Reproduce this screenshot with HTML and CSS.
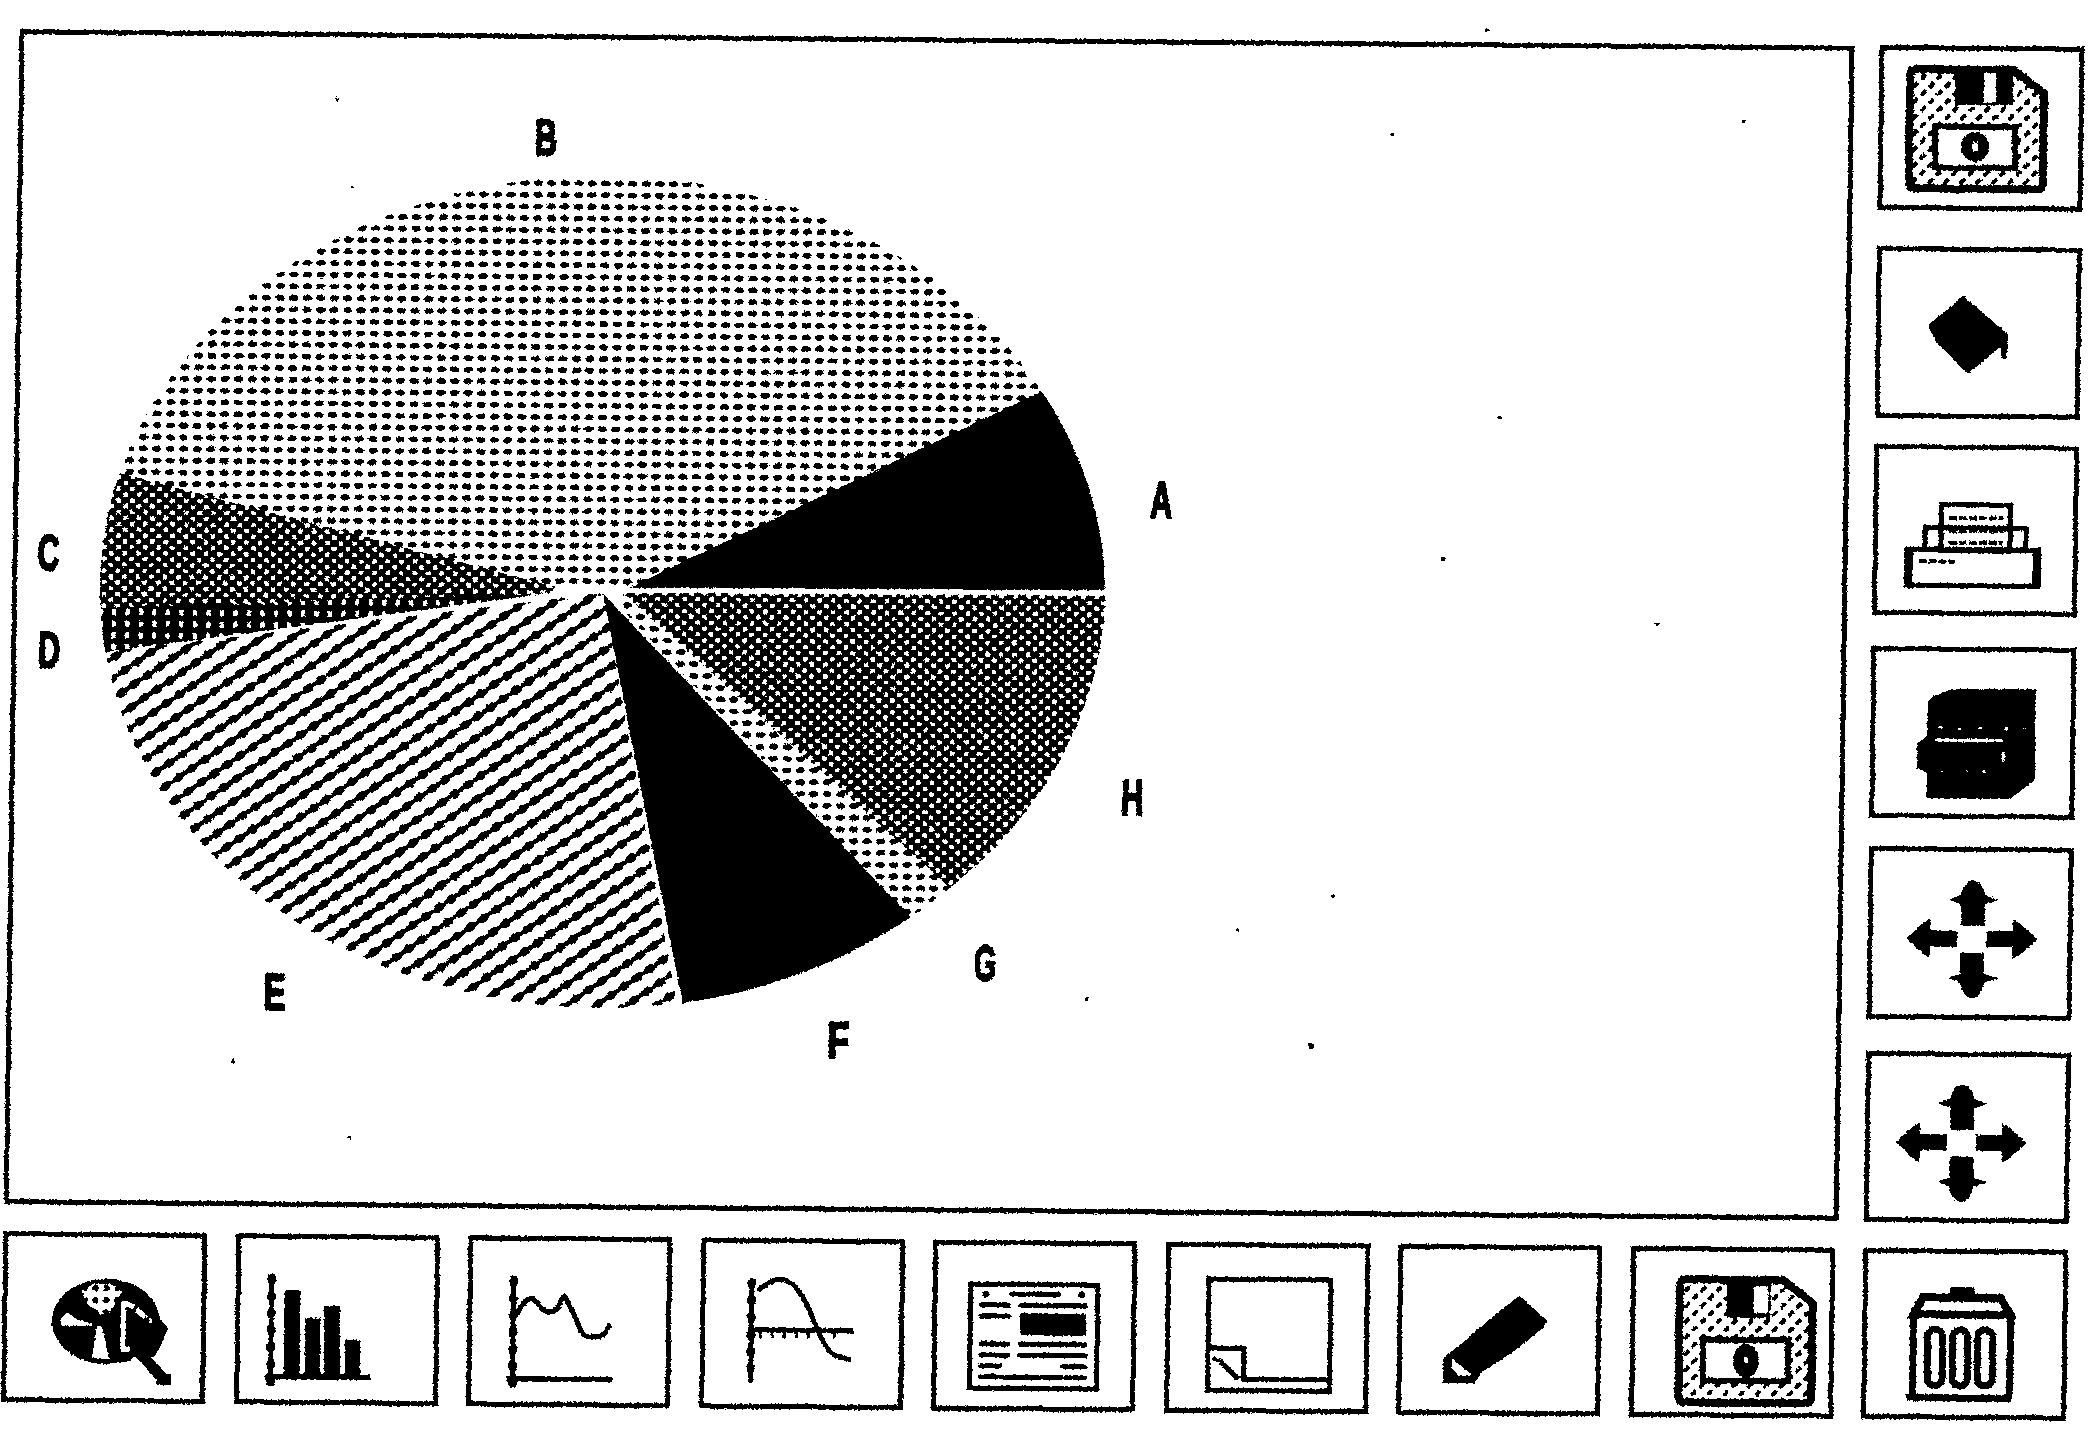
FILE: index.html
```html
<!DOCTYPE html>
<html lang="en">
<head>
    <meta charset="UTF-8">
    <title>Pie chart</title>
    <link rel="stylesheet" href="styles.css">
</head>
<body>
    <svg class="defs" xmlns="http://www.w3.org/2000/svg">
        <defs>
            <filter id="scan" x="0" y="0" width="100%" height="100%" color-interpolation-filters="sRGB">
                <feTurbulence type="fractalNoise" baseFrequency="0.45" numOctaves="2" seed="4" result="noise"/>
                <feDisplacementMap in="SourceGraphic" in2="noise" scale="3.5" xChannelSelector="R" yChannelSelector="G"/>
                <feComponentTransfer>
                    <feFuncR type="discrete" tableValues="0 1"/>
                    <feFuncG type="discrete" tableValues="0 1"/>
                    <feFuncB type="discrete" tableValues="0 1"/>
                </feComponentTransfer>
            </filter>
            <pattern id="dots" width="13.5" height="11.7" patternUnits="userSpaceOnUse">
                <ellipse cx="6.7" cy="5.8" rx="4.8" ry="3"/>
            </pattern>
            <pattern id="dark" width="13.5" height="11.7" patternUnits="userSpaceOnUse">
                <rect width="13.5" height="11.7"/>
                <rect x="1" y="3" width="4.6" height="4.4" fill="#fff"/>
                <rect x="7.8" y="8.9" width="4.6" height="4.4" fill="#fff"/>
                <rect x="7.8" y="-2.9" width="4.6" height="4.4" fill="#fff"/>
            </pattern>
            <pattern id="darker" width="13.5" height="11.7" patternUnits="userSpaceOnUse">
                <rect width="13.5" height="11.7"/>
                <rect x="4.5" y="2.5" width="4.4" height="6" fill="#fff"/>
            </pattern>
            <pattern id="hatch" width="15.6" height="17" patternUnits="userSpaceOnUse" patternTransform="rotate(-35)">
                <rect y="6.3" width="15.6" height="4.4"/>
                <ellipse cx="7.8" cy="8.5" rx="5.5" ry="4.2"/>
            </pattern>
            <pattern id="weave" width="16" height="16" patternUnits="userSpaceOnUse">
                <path d="M2 7L7 2M10 15L15 10" stroke="#000" stroke-width="4"/>
            </pattern>
            <pattern id="spots" width="11" height="12" patternUnits="userSpaceOnUse">
                <ellipse cx="5" cy="5" rx="3.2" ry="3.2"/>
            </pattern>
            <symbol id="move" viewBox="5 5 192 158" overflow="visible">
                <path d="M102 31C108 31 112 36 114 45L128 50L114 54V76H90V54L77 50L90 45C92 36 96 31 102 31Z"/>
                <path d="M90 103H114V124L128 128L114 133C112 142 108 148 102 148C96 148 92 142 90 133L77 128L90 124Z"/>
                <path d="M36 89L52 74L60 69V81H87V97H60V109L52 104Z"/>
                <path d="M167 89L150 74L142 69V81H116V97H142V109L150 104Z"/>
            </symbol>
        </defs>
    </svg>

    <div class="scan">
        <div class="upper">
            <main class="chart">
                <svg class="pie" viewBox="0 0 1825 1165" xmlns="http://www.w3.org/2000/svg">
                    <g transform="translate(-4 -2)">
                        <path d="M616 550L1026 350A502 414 0 0 0 105 440L543 550Z" fill="url(#dots)"/>
                        <path d="M543 550L105 440A502 414 0 0 0 88 575L536 556Z" fill="url(#dark)"/>
                        <path d="M536 556L88 575A502 414 0 0 0 93 619Z" fill="url(#darker)"/>
                        <path d="M590 556L93 619A502 414 0 0 0 669 965Z" fill="url(#hatch)"/>
                        <path d="M616 550L1026 350A502 414 0 0 1 1092 548Z"/>
                        <path d="M590 556L675 965A502 414 0 0 0 902 877Z"/>
                        <path d="M598 560L902 877A502 414 0 0 0 941 847L610 555Z" fill="url(#dots)"/>
                        <path d="M610 555L1092 554A502 414 0 0 1 941 847Z" fill="url(#dark)"/>

                        <text class="pie-label" x="527" y="118" textLength="22" lengthAdjust="spacingAndGlyphs">B</text>
                        <text class="pie-label" x="1147" y="475" textLength="22" lengthAdjust="spacingAndGlyphs">A</text>
                        <text class="pie-label" x="35" y="538" textLength="22" lengthAdjust="spacingAndGlyphs">C</text>
                        <text class="pie-label" x="37" y="635" textLength="22" lengthAdjust="spacingAndGlyphs">D</text>
                        <text class="pie-label" x="1122" y="773" textLength="22" lengthAdjust="spacingAndGlyphs">H</text>
                        <text class="pie-label" x="977" y="940" textLength="22" lengthAdjust="spacingAndGlyphs">G</text>
                        <text class="pie-label" x="831" y="1018" textLength="22" lengthAdjust="spacingAndGlyphs">F</text>
                        <text class="pie-label" x="267" y="975" textLength="22" lengthAdjust="spacingAndGlyphs">E</text>
                    </g>

                    <g class="specks">
                        <circle cx="1462" cy="-17" r="2"/>
                        <circle cx="313" cy="62" r="2"/>
                        <circle cx="1369" cy="88" r="2"/>
                        <circle cx="1720" cy="72" r="2"/>
                        <circle cx="1480" cy="370" r="2"/>
                        <circle cx="1425" cy="512" r="2"/>
                        <circle cx="1640" cy="575" r="2"/>
                        <circle cx="1320" cy="850" r="2"/>
                        <circle cx="1225" cy="885" r="2"/>
                        <circle cx="1300" cy="1000" r="3"/>
                        <circle cx="1075" cy="955" r="2"/>
                        <circle cx="222" cy="1025" r="2"/>
                        <circle cx="340" cy="1100" r="2"/>
                        <circle cx="330" cy="150" r="2"/>
                    </g>
                </svg>
            </main>

            <aside class="side-tools">
                <button class="tool">
                    <svg class="icon" viewBox="5 5 192 158">
                        <g transform="translate(0 3)">
                            <path class="disk" d="M37 21H134L165 44V134Q165 140 159 140H37Q31 140 31 134V27Q31 21 37 21Z"/>
                            <rect x="76" y="21" width="58" height="35"/>
                            <rect x="105" y="24" width="12" height="30" fill="#fff"/>
                            <rect class="label" x="57" y="78" width="80" height="41"/>
                            <ellipse cx="97" cy="98" rx="14" ry="15"/>
                            <rect x="95" y="93" width="5" height="9" fill="#fff"/>
                        </g>
                    </svg>
                </button>
                <button class="tool">
                    <svg class="icon" viewBox="5 5 192 158">
                        <g transform="translate(0 -3)">
                            <path d="M52 80L87 50L127 84L132 88V114L126 112V100L93 128L60 96Z"/>
                        </g>
                    </svg>
                </button>
                <button class="tool">
                    <svg class="icon" viewBox="5 5 192 158">
                        <g transform="translate(0 2)">
                            <rect class="line" x="52" y="79" width="101" height="22"/>
                            <rect class="line" x="68" y="56" width="69" height="46"/>
                            <path class="dashes" d="M76 69H130M76 82H130M76 94H130"/>
                            <rect class="line" x="34" y="101" width="132" height="36"/>
                            <rect x="32" y="101" width="8" height="37"/>
                            <rect x="160" y="101" width="8" height="37"/>
                            <path class="dashes" d="M46 113H82"/>
                        </g>
                    </svg>
                </button>
                <button class="tool">
                    <svg class="icon" viewBox="5 5 192 158">
                        <g transform="translate(0 3)">
                            <path d="M62 45L82 37H165V128L140 147H57V122L47 117V92L57 85V50Z"/>
                            <rect x="65" y="87" width="67" height="3" fill="#fff"/>
                            <ellipse cx="133" cy="105" rx="2" ry="5" fill="#fff"/>
                            <path class="grit" d="M68 76H72M88 77H91M108 76H112M135 77H138M152 76H155M70 120H74M96 119H99M112 120H116"/>
                        </g>
                    </svg>
                </button>
                <button class="tool">
                    <svg class="icon" viewBox="5 5 192 158"><use href="#move" x="8" y="5"/></svg>
                </button>
                <button class="tool">
                    <svg class="icon" viewBox="5 5 192 158"><use href="#move" y="5"/></svg>
                </button>
            </aside>
        </div>

        <nav class="bottom-tools">
            <button class="tool">
                <svg class="icon" viewBox="5 5 192 158">
                    <path d="M104 44C135 44 155 62 158 84L166 92L158 112L152 122L138 116L128 126L104 129C74 129 50 110 50 86C50 62 74 44 104 44Z"/>
                    <path d="M79 56L90 49H108L120 56L107 79H97L84 68Z" fill="#fff"/>
                    <path d="M79 56L90 49H108L120 56L107 79H97L84 68Z" fill="url(#spots)"/>
                    <path d="M59 83L65 78L75 84L90 89V91H59Z" fill="#fff"/>
                    <path d="M95 91H100L107 124L90 123Z" fill="#fff"/>
                    <path class="cursor" d="M121 66V114H128M123 68L132 72M134 74L143 82M147 85H150"/>
                    <path class="chain" d="M132 112L148 128L160 142"/>
                    <rect x="155" y="138" width="15" height="11"/>
                </svg>
            </button>
            <button class="tool">
                <svg class="icon" viewBox="5 5 192 158">
                    <path class="axis" d="M36 37V147M31 140H136"/>
                    <path class="knobs" d="M36 42V147"/>
                    <rect x="49" y="53" width="16" height="87"/>
                    <rect x="70" y="81" width="15" height="59"/>
                    <rect x="89" y="69" width="16" height="71"/>
                    <rect x="110" y="103" width="15" height="37"/>
                </svg>
            </button>
            <button class="tool">
                <svg class="icon" viewBox="5 5 192 158">
                    <path class="axis" d="M46 37V146M40 140H146"/>
                    <path class="knobs" d="M46 42V146"/>
                    <path class="curve" d="M50 75C54 66 58 60 64 59C70 60 72 70 78 72C84 74 90 72 92 66C94 60 96 54 98 58C102 66 106 74 110 82C113 90 115 96 120 97H132C138 96 140 90 143 84"/>
                </svg>
            </button>
            <button class="tool">
                <svg class="icon" viewBox="5 5 192 158">
                    <path class="axis" d="M51 38V142"/>
                    <path class="knobs" d="M51 42V142"/>
                    <path class="line" d="M48 89H154"/>
                    <path class="ticks" d="M60 90V97M72 90V97M84 90V97M96 90V97M108 90V97M120 90V97M134 90V97"/>
                    <path class="curve" d="M57 50C66 42 74 37 81 38C90 40 94 44 98 50C105 60 110 68 113 78C116 85 119 92 122 98C126 106 130 111 134 113L151 118"/>
                </svg>
            </button>
            <button class="tool">
                <svg class="icon" viewBox="5 5 192 158">
                    <rect class="sheet" x="38" y="41" width="127" height="104"/>
                    <circle cx="53" cy="51" r="3.5"/>
                    <circle cx="149" cy="51" r="3.5"/>
                    <path class="text-lines" d="M79 51H126M49 62H76M88 62H153M49 73H76M49 101H76M88 101H153M49 112H76M88 112H153M49 123H68M131 123H153M49 134H65M70 134H129M134 134H153"/>
                    <rect x="88" y="70" width="66" height="22"/>
                </svg>
            </button>
            <button class="tool">
                <svg class="icon" viewBox="5 5 192 158">
                    <path class="sheet" d="M43 34H165V145H43Z"/>
                    <path class="sheet" d="M43 103H79V134H168M53 114L74 134"/>
                    <circle cx="50" cy="114" r="2.5"/>
                </svg>
            </button>
            <button class="tool">
                <svg class="icon" viewBox="5 5 192 158">
                    <path d="M122 48L150 73L146 80L115 105L85 125L78 136H47L46 111L70 92L100 65Z"/>
                    <path d="M55 111L75 128L62 129L55 121Z" fill="#fff"/>
                </svg>
            </button>
            <button class="tool">
                <svg class="icon" viewBox="5 5 192 158">
                    <g transform="translate(4 3)">
                        <path class="disk" d="M52 27H148L178 50V143Q178 150 171 150H52Q45 150 45 143V34Q45 27 52 27Z"/>
                        <rect x="92" y="29" width="44" height="36"/>
                        <rect x="119" y="33" width="14" height="27" fill="#fff"/>
                        <rect class="label" x="69" y="87" width="85" height="41"/>
                        <ellipse cx="112" cy="108" rx="13" ry="17"/>
                        <rect x="110" y="104" width="4" height="6" fill="#fff"/>
                    </g>
                </svg>
            </button>
            <button class="tool tool-wide">
                <svg class="icon" viewBox="5 5 192 158">
                    <rect x="87" y="35" width="25" height="8"/>
                    <path class="lid" d="M60 46H138L148 63H51Z"/>
                    <path class="wall" d="M51 66V145M148 66V145M45 146H150"/>
                    <rect class="can" x="65.5" y="78" width="15" height="56" rx="7"/>
                    <rect class="can" x="90.5" y="78" width="15" height="56" rx="7"/>
                    <rect class="can" x="115.5" y="78" width="15" height="56" rx="7"/>
                </svg>
            </button>
        </nav>
    </div>
</body>
</html>
```

FILE: styles.css
```css
html, body {
    margin: 0;
    height: 100%;
    overflow: hidden;
    background: #fff;
}
.defs {
    position: absolute;
    width: 0;
    height: 0;
}
/* the whole page is a slightly crooked scan */
.scan {
    box-sizing: border-box;
    width: 2097px;
    height: 1453px;
    padding: 28px 12px 0 20px;
    background: #fff;
    transform-origin: 0 0;
    transform: matrix(1, 0.009, -0.0135, 1, 0, 0);
    filter: url(#scan);
}
.upper {
    display: flex;
    justify-content: space-between;
    height: 1177px;
}
.chart {
    box-sizing: border-box;
    width: 1835px;
    height: 1175px;
    margin-top: 1px;
    border: 5px solid #000;
}
.pie {
    display: block;
    width: 100%;
    height: 100%;
    overflow: visible;
}
.pie-label {
    font-family: "Liberation Sans", Arial, sans-serif;
    font-weight: bold;
    font-size: 50px;
    text-anchor: middle;
    stroke: #000;
    stroke-width: 2.5px;
}
.side-tools {
    display: flex;
    flex-direction: column;
    width: 205px;
}
/* the hand-cut buttons do not line up evenly */
.side-tools .tool:nth-child(1) { height: 165px; }
.side-tools .tool:nth-child(2) { height: 172px; margin-top: 36px; }
.side-tools .tool:nth-child(3) { height: 171px; margin-top: 26px; }
.side-tools .tool:nth-child(4) { height: 172px; margin-top: 31px; }
.side-tools .tool:nth-child(5) { height: 173px; margin-top: 28px; }
.side-tools .tool:nth-child(6) { height: 171px; margin-top: 32px; }
.bottom-tools {
    display: flex;
    justify-content: space-between;
    margin-top: 26px;
}
.tool {
    box-sizing: border-box;
    display: block;
    width: 204px;
    height: 171px;
    padding: 0;
    border: 5px solid #000;
    border-radius: 0;
    background: #fff;
    flex: none;
}
.side-tools .tool,
.tool-wide {
    width: 205px;
}
.icon {
    display: block;
    width: 192px;
    height: 158px;
    overflow: visible;
}
.bottom-tools .icon {
    margin-top: 3px;
}
.disk {
    fill: url(#weave);
    stroke: #000;
    stroke-width: 8;
}
.label {
    fill: #fff;
    stroke: #000;
    stroke-width: 6;
}
.line {
    fill: none;
    stroke: #000;
    stroke-width: 5;
}
.dashes {
    fill: none;
    stroke: #000;
    stroke-width: 4;
    stroke-dasharray: 8 2;
}
.grit {
    fill: none;
    stroke: #fff;
    stroke-width: 2;
}
.axis {
    fill: none;
    stroke: #000;
    stroke-width: 5;
}
.knobs {
    fill: none;
    stroke: #000;
    stroke-width: 9;
    stroke-linecap: round;
    stroke-dasharray: 1 16;
}
.curve {
    fill: none;
    stroke: #000;
    stroke-width: 5;
}
.ticks {
    fill: none;
    stroke: #000;
    stroke-width: 3;
}
.cursor {
    fill: none;
    stroke: #fff;
    stroke-width: 5;
}
.chain {
    fill: none;
    stroke: #000;
    stroke-width: 11;
}
.sheet {
    fill: none;
    stroke: #000;
    stroke-width: 5;
}
.text-lines {
    fill: none;
    stroke: #000;
    stroke-width: 5;
    stroke-linecap: round;
}
.lid {
    fill: #fff;
    stroke: #000;
    stroke-width: 8;
}
.wall {
    fill: none;
    stroke: #000;
    stroke-width: 7;
}
.can {
    fill: #fff;
    stroke: #000;
    stroke-width: 7;
}
```
